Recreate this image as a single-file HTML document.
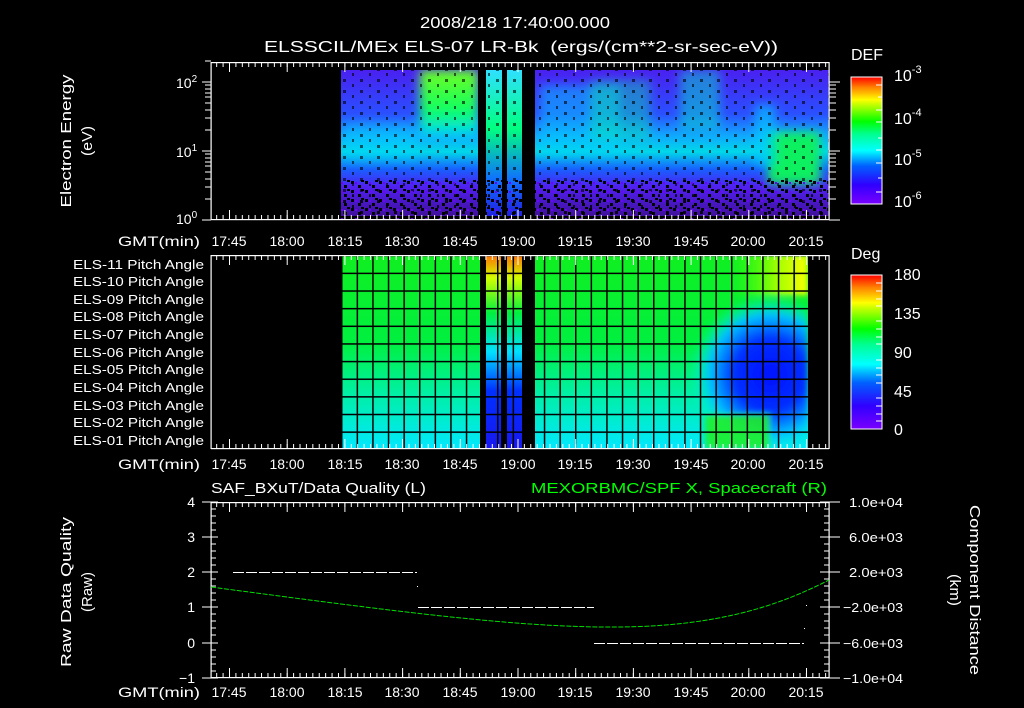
<!DOCTYPE html>
<html><head><meta charset="utf-8"><style>
html,body{margin:0;padding:0;background:#000;width:1024px;height:708px;overflow:hidden}
svg{display:block}
text{font-family:"Liberation Sans",sans-serif;fill:#fff}
</style></head><body>
<svg width="1024" height="708" viewBox="0 0 1024 708" xmlns="http://www.w3.org/2000/svg">
<defs>
<linearGradient id="rb" x1="0" y1="1" x2="0" y2="0">
<stop offset="0" stop-color="#7a00ff"/><stop offset="0.15" stop-color="#3000ff"/><stop offset="0.3" stop-color="#0060ff"/><stop offset="0.42" stop-color="#00ffff"/><stop offset="0.55" stop-color="#00ff90"/><stop offset="0.65" stop-color="#00ff00"/><stop offset="0.78" stop-color="#c0ff00"/><stop offset="0.82" stop-color="#ffff00"/><stop offset="0.92" stop-color="#ff8000"/><stop offset="1" stop-color="#ff0000"/>
</linearGradient>
<linearGradient id="sp" x1="0" y1="0" x2="0" y2="1">
<stop offset="0" stop-color="#4a20f0"/><stop offset="0.3" stop-color="#2a50ff"/><stop offset="0.45" stop-color="#10a8ff"/><stop offset="0.56" stop-color="#00d8e8"/><stop offset="0.68" stop-color="#1860ff"/><stop offset="0.8" stop-color="#5020f0"/><stop offset="1" stop-color="#40109c"/>
</linearGradient>
<linearGradient id="gb" x1="0" y1="0" x2="0" y2="1">
<stop offset="0" stop-color="#70ff20"/><stop offset="0.6" stop-color="#10ff60"/><stop offset="1" stop-color="#00d8ff"/>
</linearGradient>
<linearGradient id="st" x1="0" y1="0" x2="0" y2="1">
<stop offset="0" stop-color="#30e0ff"/><stop offset="0.4" stop-color="#00ff80"/><stop offset="0.75" stop-color="#1070ff"/><stop offset="1" stop-color="#2020e0"/>
</linearGradient>
<linearGradient id="pa" x1="0" y1="0" x2="0" y2="1">
<stop offset="0" stop-color="#10f020"/><stop offset="0.45" stop-color="#00f040"/><stop offset="0.7" stop-color="#00f0a0"/><stop offset="1" stop-color="#00e8ff"/>
</linearGradient>
<linearGradient id="ps" x1="0" y1="0" x2="0" y2="1">
<stop offset="0" stop-color="#ff7000"/><stop offset="0.12" stop-color="#d0ff00"/><stop offset="0.3" stop-color="#00f040"/><stop offset="0.5" stop-color="#00e0ff"/><stop offset="0.7" stop-color="#0030ff"/><stop offset="1" stop-color="#1818f0"/>
</linearGradient>
<radialGradient id="bl" cx="770" cy="375" r="80" gradientUnits="userSpaceOnUse">
<stop offset="0" stop-color="#0010ff"/><stop offset="0.45" stop-color="#0030ff"/><stop offset="0.75" stop-color="#00c0ff"/><stop offset="1" stop-color="#00ffd0" stop-opacity="0"/>
</radialGradient>
<linearGradient id="yl" x1="0" y1="0" x2="1" y2="0">
<stop offset="0" stop-color="#40ff00" stop-opacity="0"/><stop offset="0.6" stop-color="#a0ff00"/><stop offset="1" stop-color="#ffff00"/>
</linearGradient>
<pattern id="spk" width="14" height="9" patternUnits="userSpaceOnUse">
<rect x="1" y="1" width="3" height="3" fill="#000"/><rect x="8" y="5" width="3" height="3" fill="#000"/><rect x="5" y="2" width="2" height="2" fill="#7000ff"/><rect x="11" y="0" width="3" height="2" fill="#000"/>
</pattern>
<pattern id="spk2" width="17" height="11" patternUnits="userSpaceOnUse">
<rect x="3" y="2" width="3" height="3" fill="#000" opacity="0.6"/><rect x="12" y="7" width="2" height="3" fill="#000" opacity="0.6"/>
</pattern>
<pattern id="mn" x="229" width="6.41" height="10" patternUnits="userSpaceOnUse"><rect x="0" y="0" width="1" height="10" fill="#fff"/></pattern>
<pattern id="mj" x="229" width="57.7" height="12" patternUnits="userSpaceOnUse"><rect x="0" y="0" width="1" height="12" fill="#fff"/></pattern>
<pattern id="grid" x="341" y="255" width="15.6" height="17.64" patternUnits="userSpaceOnUse">
<rect x="0" y="0" width="1.5" height="17.64" fill="#000"/><rect x="0" y="0" width="15.6" height="1.5" fill="#000"/>
</pattern>
<filter id="bf" x="-10%" y="-10%" width="120%" height="120%"><feGaussianBlur stdDeviation="5"/></filter>
<filter id="bf2" x="-10%" y="-10%" width="120%" height="120%"><feGaussianBlur stdDeviation="3"/></filter>
<clipPath id="c1"><rect x="341" y="70" width="488" height="146"/></clipPath>
<clipPath id="c2"><rect x="535" y="255" width="273" height="194"/></clipPath>
</defs>

<text x="515" y="28" font-size="16" text-anchor="middle" textLength="190" lengthAdjust="spacingAndGlyphs">2008/218 17:40:00.000</text>
<text x="521" y="52" font-size="16" text-anchor="middle" xml:space="preserve" textLength="514" lengthAdjust="spacingAndGlyphs">ELSSCIL/MEx ELS-07 LR-Bk  (ergs/(cm**2-sr-sec-eV))</text>

<!-- Panel 1 -->
<rect x="341" y="70" width="488" height="146" fill="url(#sp)"/>
<g clip-path="url(#c1)" filter="url(#bf)">
<rect x="420" y="70" width="58" height="66" fill="url(#gb)"/>
<rect x="540" y="85" width="80" height="70" fill="#00d0ff" opacity="0.45"/>
<rect x="590" y="80" width="60" height="60" fill="#00ff90" opacity="0.35"/>
<rect x="680" y="70" width="40" height="60" fill="#00e8c0" opacity="0.45"/>
<rect x="768" y="132" width="52" height="52" fill="#10f060"/>
<rect x="755" y="105" width="20" height="60" fill="#00d0ff" opacity="0.6"/>
<rect x="345" y="125" width="70" height="35" fill="#00d8ff" opacity="0.4"/>
</g>
<rect x="486" y="70" width="16" height="146" fill="url(#st)"/>
<rect x="507" y="70" width="15" height="146" fill="url(#st)"/>
<rect x="341" y="70" width="488" height="146" fill="url(#spk2)"/>
<rect x="341" y="180" width="488" height="40" fill="url(#spk)"/>
<rect x="341" y="195" width="488" height="21" fill="url(#spk2)"/>
<rect x="478" y="70" width="8" height="150" fill="#000"/>
<rect x="502" y="70" width="5" height="150" fill="#000"/>
<rect x="522" y="70" width="13" height="150" fill="#000"/>
<g fill="#fff">
<rect x="211" y="62" width="618" height="1.2"/><rect x="211" y="219" width="618" height="1.2"/>
<rect x="210.5" y="62" width="1.2" height="158"/><rect x="828.5" y="62" width="1.2" height="158"/>
</g>
<rect x="211" y="62" width="618" height="5" fill="url(#mn)"/>
<rect x="211" y="62" width="618" height="10" fill="url(#mj)"/>
<rect x="211" y="215" width="618" height="5" fill="url(#mn)"/>
<rect x="211" y="210" width="618" height="10" fill="url(#mj)"/>
<g stroke="#fff" stroke-width="1">
<path d="M202 82H211M202 151H211M202 220H211M205 61H211M205 130H211M205 118H211M205 110H211M205 103H211M205 97H211M205 93H211M205 89H211M205 85H211M205 199H211M205 187H211M205 179H211M205 172H211M205 166H211M205 162H211M205 158H211M205 154H211"/>
<path d="M829 82H840M829 151H840M829 220H840M829 130H836M829 118H836M829 110H836M829 103H836M829 97H836M829 93H836M829 89H836M829 85H836M829 199H836M829 187H836M829 179H836M829 172H836M829 166H836M829 162H836M829 158H836M829 154H836"/>
</g>
<text x="176" y="88" font-size="14">10<tspan dy="-6" font-size="10">2</tspan></text>
<text x="176" y="157" font-size="14">10<tspan dy="-6" font-size="10">1</tspan></text>
<text x="176" y="224" font-size="14">10<tspan dy="-6" font-size="10">0</tspan></text>
<text transform="translate(71,141) rotate(-90)" font-size="15" text-anchor="middle" textLength="133" lengthAdjust="spacingAndGlyphs">Electron Energy</text>
<text transform="translate(92,141) rotate(-90)" font-size="15" text-anchor="middle" textLength="30" lengthAdjust="spacingAndGlyphs">(eV)</text>
<g font-size="14" text-anchor="middle">
<text x="229" y="246">17:45</text><text x="287" y="246">18:00</text><text x="345" y="246">18:15</text><text x="402" y="246">18:30</text><text x="460" y="246">18:45</text><text x="518" y="246">19:00</text><text x="575" y="246">19:15</text><text x="633" y="246">19:30</text><text x="691" y="246">19:45</text><text x="748" y="246">20:00</text><text x="806" y="246">20:15</text>
</g>
<text x="118" y="246" font-size="14" textLength="82" lengthAdjust="spacingAndGlyphs">GMT(min)</text>

<!-- DEF colorbar -->
<text x="851" y="60" font-size="16">DEF</text>
<rect x="851" y="77" width="31" height="127" fill="url(#rb)" stroke="#fff" stroke-width="1"/>
<g stroke="#fff"><path d="M876 85H882M878 97H882M876 110H882M876 122H882M878 138H882M876 150H882M876 163H882M878 178H882M876 192H882"/></g>
<text x="894" y="81" font-size="16">10<tspan dy="-8" font-size="11">-3</tspan></text>
<text x="894" y="124" font-size="16">10<tspan dy="-8" font-size="11">-4</tspan></text>
<text x="894" y="165" font-size="16">10<tspan dy="-8" font-size="11">-5</tspan></text>
<text x="894" y="207" font-size="16">10<tspan dy="-8" font-size="11">-6</tspan></text>

<!-- Panel 2 -->
<rect x="341" y="255" width="467" height="194" fill="url(#pa)"/>
<g clip-path="url(#c2)" filter="url(#bf2)">
<rect x="690" y="285" width="118" height="164" fill="url(#bl)"/>
<rect x="730" y="255" width="78" height="40" fill="url(#yl)"/>
<rect x="705" y="414" width="65" height="35" fill="#20f020" opacity="0.85"/>
</g>
<rect x="486" y="255" width="16" height="194" fill="url(#ps)"/>
<rect x="507" y="255" width="15" height="194" fill="url(#ps)"/>
<rect x="341" y="255" width="468" height="194" fill="url(#grid)"/>
<rect x="480" y="255" width="6" height="194" fill="#000"/>
<rect x="501" y="255" width="6" height="194" fill="#000"/>
<rect x="522" y="255" width="13" height="194" fill="#000"/>
<rect x="808" y="255" width="21" height="194" fill="#000"/>
<g fill="#fff">
<rect x="211" y="255" width="618" height="1.2"/><rect x="211" y="448" width="618" height="1.2"/>
<rect x="210.5" y="255" width="1.2" height="194"/><rect x="828.5" y="255" width="1.2" height="194"/>
</g>
<rect x="211" y="255" width="618" height="5" fill="url(#mn)"/>
<rect x="211" y="255" width="618" height="10" fill="url(#mj)"/>
<rect x="211" y="444" width="618" height="5" fill="url(#mn)"/>
<rect x="211" y="439" width="618" height="10" fill="url(#mj)"/>
<g font-size="13" text-anchor="end">
<text x="204" y="269" textLength="131" lengthAdjust="spacingAndGlyphs">ELS-11 Pitch Angle</text><text x="204" y="286" textLength="131" lengthAdjust="spacingAndGlyphs">ELS-10 Pitch Angle</text><text x="204" y="304" textLength="131" lengthAdjust="spacingAndGlyphs">ELS-09 Pitch Angle</text><text x="204" y="321" textLength="131" lengthAdjust="spacingAndGlyphs">ELS-08 Pitch Angle</text><text x="204" y="339" textLength="131" lengthAdjust="spacingAndGlyphs">ELS-07 Pitch Angle</text><text x="204" y="357" textLength="131" lengthAdjust="spacingAndGlyphs">ELS-06 Pitch Angle</text><text x="204" y="374" textLength="131" lengthAdjust="spacingAndGlyphs">ELS-05 Pitch Angle</text><text x="204" y="392" textLength="131" lengthAdjust="spacingAndGlyphs">ELS-04 Pitch Angle</text><text x="204" y="410" textLength="131" lengthAdjust="spacingAndGlyphs">ELS-03 Pitch Angle</text><text x="204" y="427" textLength="131" lengthAdjust="spacingAndGlyphs">ELS-02 Pitch Angle</text><text x="204" y="445" textLength="131" lengthAdjust="spacingAndGlyphs">ELS-01 Pitch Angle</text>
</g>
<g font-size="14" text-anchor="middle">
<text x="229" y="469">17:45</text><text x="287" y="469">18:00</text><text x="345" y="469">18:15</text><text x="402" y="469">18:30</text><text x="460" y="469">18:45</text><text x="518" y="469">19:00</text><text x="575" y="469">19:15</text><text x="633" y="469">19:30</text><text x="691" y="469">19:45</text><text x="748" y="469">20:00</text><text x="806" y="469">20:15</text>
</g>
<text x="118" y="469" font-size="14" textLength="82" lengthAdjust="spacingAndGlyphs">GMT(min)</text>

<!-- Deg colorbar -->
<text x="851" y="259" font-size="16">Deg</text>
<rect x="851" y="275" width="31" height="154" fill="url(#rb)" stroke="#fff" stroke-width="1"/>
<g stroke="#fff"><path d="M876 283H882M876 291H882M876 299H882M876 306H882M876 321H882M876 329H882M876 337H882M876 344H882M876 360H882M876 368H882M876 375H882M876 383H882M876 398H882M876 406H882M876 414H882M876 421H882"/></g>
<g font-size="16"><text x="894" y="280">180</text><text x="894" y="319">135</text><text x="894" y="358">90</text><text x="894" y="397">45</text><text x="894" y="435">0</text></g>

<!-- Panel 3 -->
<text x="211" y="493" font-size="15" textLength="215" lengthAdjust="spacingAndGlyphs">SAF_BXuT/Data Quality (L)</text>
<text x="827" y="493" font-size="15" text-anchor="end" style="fill:#00ff00" textLength="296" lengthAdjust="spacingAndGlyphs">MEXORBMC/SPF X, Spacecraft (R)</text>
<g fill="#fff">
<rect x="211" y="502" width="618" height="1.2"/><rect x="211" y="677" width="618" height="1.2"/>
<rect x="210.5" y="502" width="1.2" height="176"/><rect x="828.5" y="502" width="1.2" height="176"/>
</g>
<rect x="211" y="502" width="618" height="5" fill="url(#mn)"/>
<rect x="211" y="502" width="618" height="10" fill="url(#mj)"/>
<rect x="211" y="673" width="618" height="5" fill="url(#mn)"/>
<rect x="211" y="668" width="618" height="10" fill="url(#mj)"/>
<g stroke="#fff" stroke-width="1">
<path d="M202 502H218M202 537H218M202 572H218M202 607H218M202 643H218M202 678H218M211 509H216M211 516H216M211 523H216M211 530H216M211 544H216M211 551H216M211 558H216M211 565H216M211 579H216M211 586H216M211 593H216M211 600H216M211 614H216M211 621H216M211 628H216M211 635H216M211 650H216M211 657H216M211 664H216M211 671H216"/>
<path d="M820 502H840M820 537H840M820 572H840M820 607H840M820 643H840M820 678H840M824 509H829M824 516H829M824 523H829M824 530H829M824 544H829M824 551H829M824 558H829M824 565H829M824 579H829M824 586H829M824 593H829M824 600H829M824 614H829M824 621H829M824 628H829M824 635H829M824 650H829M824 657H829M824 664H829M824 671H829"/>
</g>
<g font-size="14" text-anchor="end"><text x="195" y="507">4</text><text x="195" y="542">3</text><text x="195" y="577">2</text><text x="195" y="612">1</text><text x="195" y="648">0</text><text x="195" y="683">−1</text></g>
<g font-size="13"><text x="849" y="507" textLength="54" lengthAdjust="spacingAndGlyphs">1.0e+04</text><text x="849" y="542" textLength="54" lengthAdjust="spacingAndGlyphs">6.0e+03</text><text x="849" y="577" textLength="54" lengthAdjust="spacingAndGlyphs">2.0e+03</text><text x="843" y="612" textLength="60" lengthAdjust="spacingAndGlyphs">−2.0e+03</text><text x="843" y="648" textLength="60" lengthAdjust="spacingAndGlyphs">−6.0e+03</text><text x="843" y="683" textLength="60" lengthAdjust="spacingAndGlyphs">−1.0e+04</text></g>
<g stroke="#fff" stroke-width="1" stroke-dasharray="11 2" fill="none">
<path d="M233 572.5H417"/><path d="M418 607.5H594"/><path d="M594 643.5H804"/>
</g>
<rect x="417" y="586" width="1" height="1" fill="#fff"/>
<rect x="806" y="605" width="1" height="1" fill="#fff"/>
<rect x="804" y="628" width="1" height="1" fill="#fff"/>
<path d="M211 587 C 400 612, 520 628, 620 627 S 780 605, 829 580" stroke="#00e000" stroke-width="1" stroke-dasharray="5 1.5" fill="none"/>
<text transform="translate(71,592) rotate(-90)" font-size="15" text-anchor="middle" textLength="150" lengthAdjust="spacingAndGlyphs">Raw Data Quality</text>
<text transform="translate(92,592) rotate(-90)" font-size="15" text-anchor="middle" textLength="40" lengthAdjust="spacingAndGlyphs">(Raw)</text>
<text transform="translate(970,590) rotate(90)" font-size="15" text-anchor="middle" textLength="170" lengthAdjust="spacingAndGlyphs">Component Distance</text>
<text transform="translate(950,590) rotate(90)" font-size="15" text-anchor="middle" textLength="32" lengthAdjust="spacingAndGlyphs">(km)</text>
<g font-size="14" text-anchor="middle">
<text x="229" y="697">17:45</text><text x="287" y="697">18:00</text><text x="345" y="697">18:15</text><text x="402" y="697">18:30</text><text x="460" y="697">18:45</text><text x="518" y="697">19:00</text><text x="575" y="697">19:15</text><text x="633" y="697">19:30</text><text x="691" y="697">19:45</text><text x="748" y="697">20:00</text><text x="806" y="697">20:15</text>
</g>
<text x="118" y="697" font-size="14" textLength="82" lengthAdjust="spacingAndGlyphs">GMT(min)</text>
</svg>
</body></html>
